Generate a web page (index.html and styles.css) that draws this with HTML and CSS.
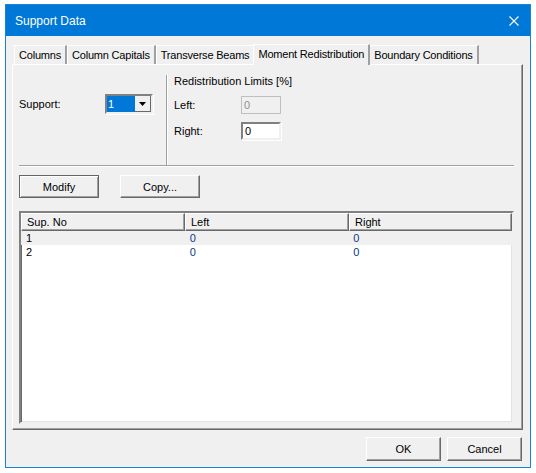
FILE: index.html
```html
<!DOCTYPE html>
<html lang="en">
<head>
    <meta charset="UTF-8">
    <title>Support Data</title>
    <link rel="stylesheet" href="styles.css">
</head>
<body>
    <div class="window">
        <div class="titlebar">
            <span class="title">Support Data</span>
            <svg class="close" width="10" height="10" viewBox="0 0 10 10">
                <path d="M0.5 0.5 L9.5 9.5 M9.5 0.5 L0.5 9.5" stroke="#fff" stroke-width="1.1"/>
            </svg>
        </div>

        <div class="content">
            <div class="tabs">
                <div class="tab">Columns</div>
                <div class="tab">Column Capitals</div>
                <div class="tab">Transverse Beams</div>
                <div class="tab active">Moment Redistribution</div>
                <div class="tab">Boundary Conditions</div>
            </div>

            <div class="panel">
                <div class="top-section">
                    <div class="support-box">
                        <span class="label">Support:</span>
                        <div class="combo">
                            <span class="combo-value">1</span>
                            <span class="combo-btn">
                                <svg width="7" height="4" viewBox="0 0 7 4"><path d="M0 0 H7 L3.5 4 Z" fill="#000"/></svg>
                            </span>
                        </div>
                    </div>
                    <div class="limits-box">
                        <div class="group-title">Redistribution Limits [%]</div>
                        <div class="field-row">
                            <span class="label">Left:</span>
                            <div class="textbox disabled">0</div>
                        </div>
                        <div class="field-row">
                            <span class="label">Right:</span>
                            <div class="textbox">0</div>
                        </div>
                    </div>
                </div>
                <div class="separator"></div>

                <div class="button-row">
                    <button class="btn default">Modify</button>
                    <button class="btn">Copy...</button>
                </div>

                <div class="listview">
                    <div class="list-header">
                        <div class="col">Sup. No</div>
                        <div class="col">Left</div>
                        <div class="col last">Right</div>
                    </div>
                    <div class="list-row selected">
                        <div class="col">1</div>
                        <div class="col">0</div>
                        <div class="col">0</div>
                    </div>
                    <div class="list-row">
                        <div class="col">2</div>
                        <div class="col">0</div>
                        <div class="col">0</div>
                    </div>
                </div>
            </div>

            <div class="footer">
                <button class="btn dlg">OK</button>
                <button class="btn dlg">Cancel</button>
            </div>
        </div>
    </div>
</body>
</html>
```

FILE: styles.css
```css
body {
    margin: 0;
    background-color: #ffffff;
    font-family: "Liberation Sans", Arial, sans-serif;
    font-size: 11px;
    color: #000;
}
.window {
    margin: 4px 0 0 5px;
    width: 524px;
    height: 462px;
    border: 1px solid #1883d7;
    background-color: #f0f0f0;
    display: flex;
    flex-direction: column;
}
.titlebar {
    height: 31px;
    background-color: #0078d7;
    display: flex;
    align-items: center;
    padding: 0 11px 0 9px;
}
.title {
    color: #fff;
    font-size: 12px;
    flex: 1;
}
.content {
    padding: 8px 7px 0 6px;
}
.tabs {
    display: flex;
    align-items: flex-end;
    height: 20px;
    padding-left: 2px;
    letter-spacing: -0.2px;
}
.tab {
    height: 18px;
    line-height: 18px;
    padding: 0 4px;
    border: 1px solid #fff;
    border-right: 2px solid #a0a0a0;
    border-bottom: none;
}
.tab.active {
    height: 20px;
    line-height: 18px;
    padding: 0 4px;
    margin: 0 -1px 0 -2px;
    background-color: #f0f0f0;
    position: relative;
    top: 1px;
    z-index: 1;
}
.panel {
    border: 1px solid #fff;
    border-right: 1px solid #696969;
    border-bottom: 1px solid #696969;
    box-shadow: inset -1px -1px 0 #a0a0a0;
    height: 364px;
    padding: 0 8px 0 6px;
}
.top-section {
    display: flex;
    height: 100px;
}
.support-box {
    width: 147px;
    border-right: 1px solid #a0a0a0;
    box-shadow: 1px 0 0 #fff;
    display: flex;
    align-items: flex-start;
    padding-top: 19px;
    margin-top: 10px;
    height: 71px;
}
.support-box .label {
    width: 86px;
    padding-top: 4px;
}
.combo {
    display: flex;
    width: 44px;
    height: 16px;
    border: 2px solid #808080;
    border-right-color: #f0f0f0;
    border-bottom-color: #f0f0f0;
    box-shadow: 1px 1px 0 #fff;
    background-color: #fff;
}
.combo-value {
    flex: 1;
    background-color: #0078d7;
    color: #fff;
    line-height: 16px;
    padding-left: 1px;
}
.combo-btn {
    width: 16px;
    display: flex;
    align-items: center;
    justify-content: center;
    background-color: #f0f0f0;
    border-right: 1px solid #696969;
    border-bottom: 1px solid #696969;
    box-sizing: border-box;
}
.limits-box {
    padding: 10px 0 0 7px;
    flex: 1;
}
.group-title {
    height: 17px;
}
.field-row {
    display: flex;
    align-items: center;
    height: 26px;
}
.field-row .label {
    width: 67px;
}
.textbox {
    width: 34px;
    height: 14px;
    line-height: 14px;
    padding-left: 2px;
    border: 2px solid #808080;
    border-right-color: #f0f0f0;
    border-bottom-color: #f0f0f0;
    box-shadow: 1px 1px 0 #fff;
    background-color: #fff;
}
.textbox.disabled {
    background-color: #f0f0f0;
    color: #8f8f8f;
    border-color: #bfbfbf;
    box-shadow: none;
    border-width: 1px;
    width: 36px;
    height: 16px;
    line-height: 16px;
}
.separator {
    height: 0;
    border-top: 1px solid #a0a0a0;
    border-bottom: 1px solid #fff;
}
.button-row {
    display: flex;
    gap: 21px;
    margin-top: 8px;
    height: 23px;
}
.btn {
    font-family: "Liberation Sans", Arial, sans-serif;
    font-size: 11px;
    width: 80px;
    height: 23px;
    padding: 0;
    background-color: #f0f0f0;
    border: 1px solid;
    border-color: #fff #696969 #696969 #fff;
    box-shadow: inset -1px -1px 0 #a0a0a0;
    color: #000;
}
.btn.default {
    border-color: #646464;
    box-shadow: inset 1px 1px 0 #fff, inset -1px -1px 0 #a0a0a0;
}
.listview {
    margin-top: 13px;
    height: 209px;
    border: 2px solid;
    border-color: #808080 #f0f0f0 #f0f0f0 #808080;
    box-shadow: inset 1px 1px 0 #696969, inset -1px -1px 0 #e3e3e3;
    background-color: #fff;
}
.list-header {
    display: flex;
    height: 18px;
}
.list-header .col {
    width: 164px;
    line-height: 16px;
    padding-left: 5px;
    background-color: #f0f0f0;
    border: 1px solid;
    border-color: #fff #696969 #696969 #fff;
    box-shadow: inset -1px -1px 0 #a0a0a0;
    box-sizing: border-box;
}
.list-header .col.last {
    flex: 1;
    width: auto;
}
.list-row {
    display: flex;
    height: 14px;
    line-height: 14px;
}
.list-row.selected {
    background-color: #f0f0f0;
}
.list-row .col {
    width: 164px;
    padding-left: 5px;
    box-sizing: border-box;
    color: #0a3a8a;
}
.list-row .col:first-child {
    color: #000;
}
.footer {
    display: flex;
    justify-content: flex-end;
    gap: 6px;
    padding-top: 7px;
    padding-right: 1px;
}
.btn.dlg {
    width: 75px;
    height: 24px;
}
```
